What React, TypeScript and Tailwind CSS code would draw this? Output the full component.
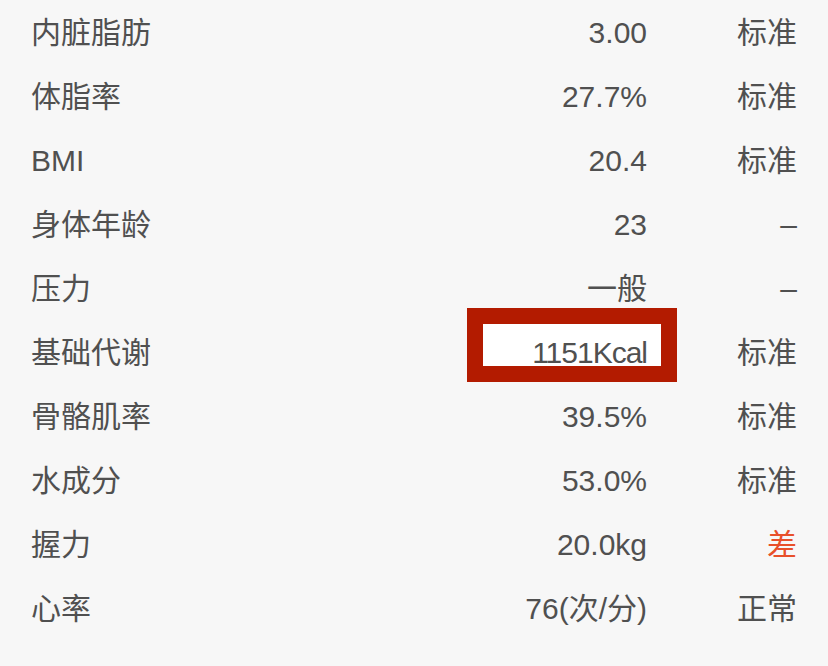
import React from "react";

const rows: { label: string; value: string; status: string; bad?: boolean; boxed?: boolean }[] = [
  { label: "内脏脂肪", value: "3.00", status: "标准" },
  { label: "体脂率", value: "27.7%", status: "标准" },
  { label: "BMI", value: "20.4", status: "标准" },
  { label: "身体年龄", value: "23", status: "–" },
  { label: "压力", value: "一般", status: "–" },
  { label: "基础代谢", value: "1151Kcal", status: "标准", boxed: true },
  { label: "骨骼肌率", value: "39.5%", status: "标准" },
  { label: "水成分", value: "53.0%", status: "标准" },
  { label: "握力", value: "20.0kg", status: "差", bad: true },
  { label: "心率", value: "76(次/分)", status: "正常" },
];

export default function App() {
  return (
    <div
      className="w-[828px] h-[666px] bg-[#f7f7f7] overflow-hidden text-[30px] text-[#505050]"
      style={{ fontFamily: '"Liberation Sans", "Noto Sans CJK SC", sans-serif' }}
    >
      {rows.map((r) => (
        <div key={r.label} className="relative flex items-center h-[64px] pl-[31px] pr-[31px]">
          {r.boxed && (
            <div className="absolute left-[467px] top-[-12px] w-[210px] h-[74px] border-[16px] border-[#b31b00] bg-white" />
          )}
          <div className="relative flex-1">{r.label}</div>
          <div className={`relative text-right ${r.boxed ? "tracking-[-1px]" : ""}`}>{r.value}</div>
          <div className={`relative w-[150px] text-right ${r.bad ? "text-[#e8502a]" : ""}`}>{r.status}</div>
        </div>
      ))}
    </div>
  );
}
